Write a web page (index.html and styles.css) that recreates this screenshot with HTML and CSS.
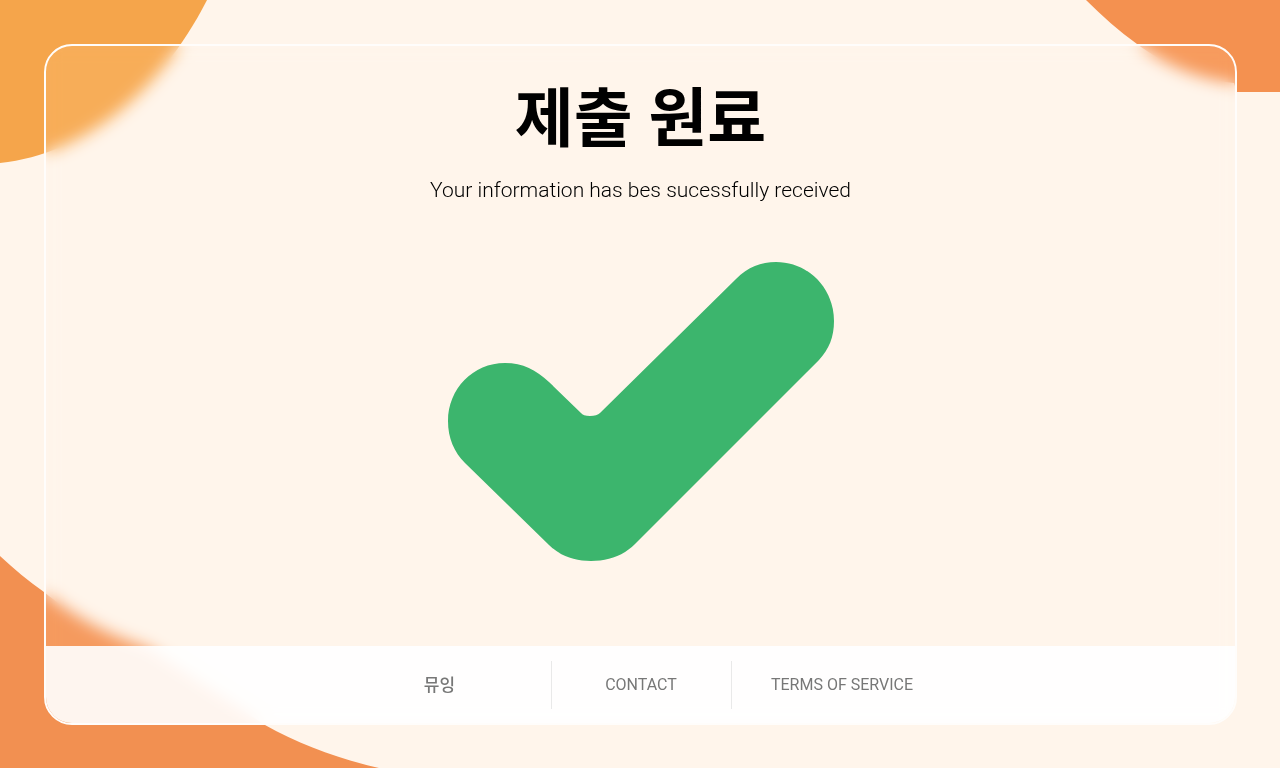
FILE: index.html
```
<!DOCTYPE html>
<html lang="ko">
<head>
  <meta charset="UTF-8" />
  <meta name="viewport" content="width=device-width, initial-scale=1.0" />
  <title>제출 원료</title>
  <link rel="stylesheet" href="styles.css">
</head>
<body>

  <svg class="blob blob-top-left" viewBox="0 0 208 164" aria-hidden="true">
    <path d="M0 0H207C160 92 85 154 0 163Z" />
  </svg>
  <svg class="blob blob-top-right" viewBox="0 0 200 92" aria-hidden="true">
    <path d="M6 0C22 16 39 31 57 44C86 66 121 80 154 83L157 92H200V0Z" />
  </svg>
  <svg class="blob blob-bottom-left" viewBox="0 0 380 212" aria-hidden="true">
    <path d="M0 0C14 13 28 25 44 36C74 60 105 78 148 92L265 169C300 189 340 203 379 212H0Z" />
  </svg>

  <div class="card">
    <main>
      <h1>제출 원료</h1>
      <p>Your information has bes sucessfully received</p>
      <svg class="check" viewBox="0 0 386 300" aria-hidden="true">
        <path d="M57 101C75 101 88 108 101 120L133 151Q135 154 142 154Q149 154 152 151L288 17C300 5 313 0 328 0C361 0 386 27 386 59C386 75 381 87 371 98L187 282C175 294 160 299 143 299C127 299 112 294 101 283L17 201C6 190 0 176 0 159C0 127 25 101 57 101Z" />
      </svg>
    </main>

    <footer>
      <nav>
        <a class="ko" href="#">뮤잉</a>
        <a href="#">CONTACT</a>
        <a href="#">TERMS OF SERVICE</a>
      </nav>
    </footer>
  </div>

</body>
</html>
```
FILE: styles.css
```
/* Global Styles */
* {
  box-sizing: border-box;
}
body {
  display: flex;
  position: relative;
  min-height: 100vh;
  margin: 0;
  padding: 44px 43px 43px 44px;
  overflow-x: hidden;
  background-color: #fff5eb;
  color: #000;
  font-family: Roboto, "Noto Sans CJK KR", sans-serif;
}

/* Background shapes */
.blob {
  position: absolute;
  display: block;
}
.blob-top-left {
  top: 0;
  left: 0;
  width: 208px;
  fill: #f5a54b;
}
.blob-top-right {
  top: 0;
  right: 0;
  width: 200px;
  fill: #f49150;
}
.blob-bottom-left {
  bottom: 0;
  left: 0;
  width: 380px;
  fill: #f29051;
}

/* Card */
.card {
  position: relative;
  display: flex;
  flex: 1;
  flex-direction: column;
  overflow: hidden;
  border: 2px solid #fffdfb;
  border-radius: 28px;
  background-color: rgba(255, 245, 235, 0.1);
  backdrop-filter: blur(8px) saturate(1.03);
}
main {
  display: flex;
  flex: 1;
  flex-direction: column;
  align-items: center;
  padding: 34px 24px 24px;
  text-align: center;
}
h1 {
  margin: 0;
  font-size: 64px;
  font-weight: 700;
  line-height: 80px;
}
p {
  margin: 14px 0 0;
  font-size: 21px;
  font-weight: 300;
  line-height: 32px;
}
.check {
  width: 386px;
  max-width: 100%;
  margin-top: 56px;
  fill: #3cb56d;
}

/* Footer */
footer {
  display: flex;
  align-items: center;
  justify-content: center;
  min-height: 77px;
  background-color: rgba(255, 255, 255, 0.9);
}
nav {
  display: grid;
  grid-template-columns: 222px 180px 222px;
}
nav a {
  color: #777;
  font-size: 16px;
  line-height: 48px;
  text-align: center;
  text-decoration: none;
}
nav .ko {
  font-size: 17px;
  font-weight: 500;
}
nav a + a {
  border-left: 1px solid #e9e9e9;
}
nav a:hover {
  color: #333;
}

@media screen and (max-width: 720px) {
  h1 { font-size: 40px; }
  nav { grid-template-columns: 1fr; }
  nav a + a { border-left: none; }
}
```
